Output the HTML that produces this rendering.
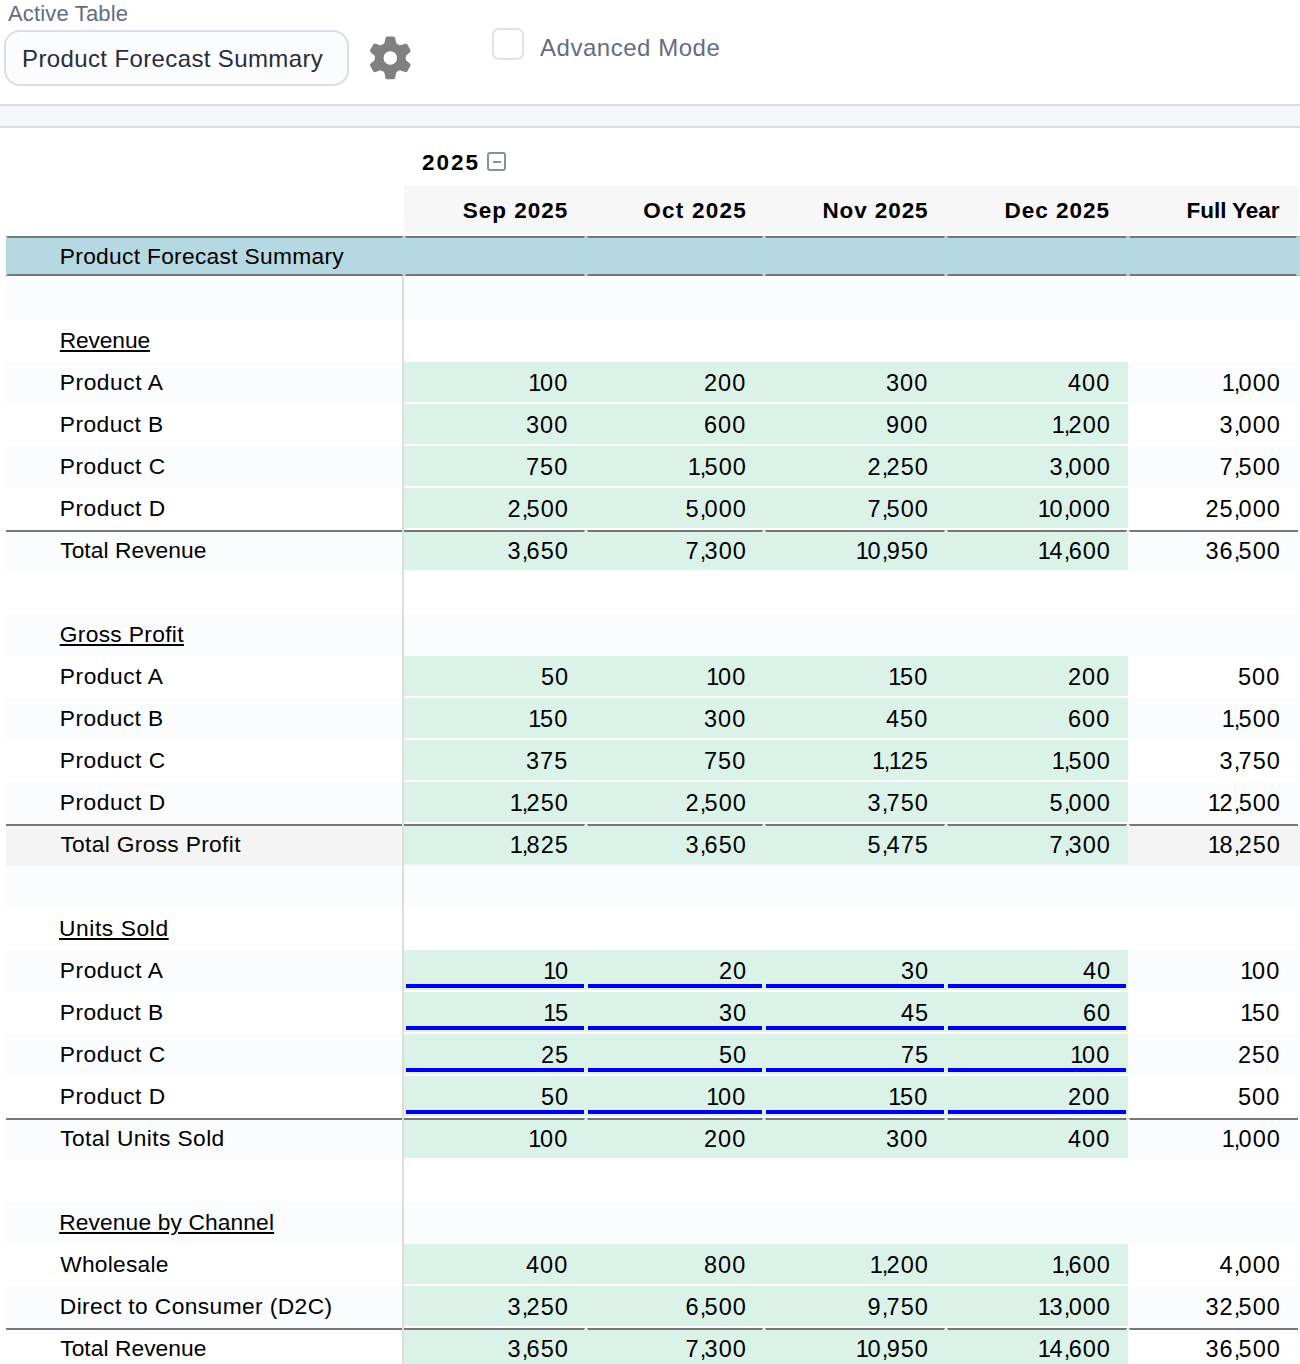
<!DOCTYPE html><html><head><meta charset="utf-8"><title>Product Forecast Summary</title><style>
*{box-sizing:border-box;margin:0;padding:0}
html,body{width:1300px;height:1364px;overflow:hidden;background:#fff}
body{position:relative;font-family:"Liberation Sans",sans-serif;color:#000}
.a{position:absolute}
.t{position:absolute;white-space:nowrap;font-size:22.75px;line-height:40px;height:40px}
.h{position:absolute;white-space:nowrap;font-size:22.5px;font-weight:bold;line-height:32px}
.u{text-decoration:underline;text-decoration-thickness:2px;text-underline-offset:2px}
</style></head><body>
<div class="a" style="left:8px;top:1px;font-size:22px;line-height:26px;color:#646c7f;letter-spacing:0.16px;white-space:nowrap">Active Table</div>
<div class="a" style="left:4px;top:30px;width:345px;height:56px;border:2px solid #dcdce9;border-radius:16px;background:#fbfcfe"></div>
<div class="a" style="left:22px;top:31px;height:56px;line-height:56px;font-size:24px;color:#292c3b;letter-spacing:0.38px;white-space:nowrap">Product Forecast Summary</div>
<svg class="a" style="left:364px;top:30px" width="54" height="56" viewBox="0 0 54 56"><path fill="#808080" fill-rule="evenodd" stroke="#808080" stroke-width="3.8" stroke-linejoin="round" d="M22.20 13.95L23.30 8.40L29.30 8.40L30.40 13.95Q32.65 16.90 36.33 17.37L41.69 15.55L44.69 20.75L40.43 24.48Q39.00 27.90 40.43 31.32L44.69 35.05L41.69 40.25L36.33 38.43Q32.65 38.90 30.40 41.85L29.30 47.40L23.30 47.40L22.20 41.85Q19.95 38.90 16.27 38.43L10.91 40.25L7.91 35.05L12.17 31.32Q13.60 27.90 12.17 24.48L7.91 20.75L10.91 15.55L16.27 17.37Q19.95 16.90 22.20 13.95ZM34.95 27.90A8.65 8.65 0 1 0 17.65 27.90A8.65 8.65 0 1 0 34.95 27.90Z"/></svg>
<div class="a" style="left:492px;top:28px;width:32px;height:32px;border:2px solid #dfe2e7;border-radius:7px;background:#fff"></div>
<div class="a" style="left:540px;top:30px;height:36px;line-height:36px;font-size:24px;color:#646c7f;letter-spacing:0.53px;white-space:nowrap">Advanced Mode</div>
<div class="a" style="left:0;top:104px;width:1300px;height:24px;background:#f6f7fb;border-top:2px solid #dedde9;border-bottom:2px solid #dedde9"></div>
<div class="h" style="left:422.10px;top:147px;letter-spacing:1.967px">2025</div>
<div class="a" style="left:487px;top:152px;width:19px;height:19px;border:2px solid #869394;border-radius:3px"></div>
<div class="a" style="left:493px;top:161px;width:8px;height:2px;background:#869394"></div>
<div class="a" style="left:404px;top:186px;width:894px;height:48px;background:#f7f7f7"></div>
<div class="h" style="left:462.80px;top:195px;letter-spacing:1.000px">Sep 2025</div>
<div class="h" style="left:643.30px;top:195px;letter-spacing:1.243px">Oct 2025</div>
<div class="h" style="left:822.40px;top:195px;letter-spacing:0.914px">Nov 2025</div>
<div class="h" style="left:1004.50px;top:195px;letter-spacing:0.986px">Dec 2025</div>
<div class="h" style="left:1186.60px;top:195px;letter-spacing:-0.062px">Full Year</div>
<div class="a" style="left:6px;top:236px;width:1294px;height:40px;background:#b6d8e3;border-top:2px solid #777777;border-bottom:2px solid #777777"></div>
<div class="t" style="left:59.80px;top:237px;line-height:38px;letter-spacing:0.304px">Product Forecast Summary</div>
<div class="a" style="left:6px;top:276px;width:1294px;height:44px;background:#fbfcfe"></div>
<div class="t u" style="left:59.80px;top:320px;letter-spacing:-0.133px">Revenue</div>
<div class="a" style="left:6px;top:362px;width:1294px;height:42px;background:#fbfcfe"></div>
<div class="a" style="left:404px;top:362px;width:724px;height:40px;background:#daf2e8"></div>
<div class="t" style="left:59.80px;top:362px;letter-spacing:0.550px">Product A</div>
<div class="t" style="left:528.14px;top:363px;font-size:23.5px;letter-spacing:1.029px"><span style="letter-spacing:-1.171px">1</span>00</div>
<div class="t" style="left:703.94px;top:363px;font-size:23.5px;letter-spacing:1.029px">200</div>
<div class="t" style="left:885.94px;top:363px;font-size:23.5px;letter-spacing:1.029px">300</div>
<div class="t" style="left:1067.94px;top:363px;font-size:23.5px;letter-spacing:1.029px">400</div>
<div class="t" style="left:1221.72px;top:363px;font-size:23.5px;letter-spacing:1.029px"><span style="letter-spacing:-1.171px">1</span><span style="letter-spacing:-1.608px">,</span>000</div>
<div class="a" style="left:404px;top:404px;width:724px;height:40px;background:#daf2e8"></div>
<div class="t" style="left:59.80px;top:404px;letter-spacing:0.450px">Product B</div>
<div class="t" style="left:525.94px;top:405px;font-size:23.5px;letter-spacing:1.029px">300</div>
<div class="t" style="left:703.94px;top:405px;font-size:23.5px;letter-spacing:1.029px">600</div>
<div class="t" style="left:885.94px;top:405px;font-size:23.5px;letter-spacing:1.029px">900</div>
<div class="t" style="left:1051.72px;top:405px;font-size:23.5px;letter-spacing:1.029px"><span style="letter-spacing:-1.171px">1</span><span style="letter-spacing:-1.608px">,</span>200</div>
<div class="t" style="left:1219.52px;top:405px;font-size:23.5px;letter-spacing:1.029px">3<span style="letter-spacing:-1.608px">,</span>000</div>
<div class="a" style="left:6px;top:446px;width:1294px;height:42px;background:#fbfcfe"></div>
<div class="a" style="left:404px;top:446px;width:724px;height:40px;background:#daf2e8"></div>
<div class="t" style="left:59.80px;top:446px;letter-spacing:0.525px">Product C</div>
<div class="t" style="left:525.94px;top:447px;font-size:23.5px;letter-spacing:1.029px">750</div>
<div class="t" style="left:687.72px;top:447px;font-size:23.5px;letter-spacing:1.029px"><span style="letter-spacing:-1.171px">1</span><span style="letter-spacing:-1.608px">,</span>500</div>
<div class="t" style="left:867.52px;top:447px;font-size:23.5px;letter-spacing:1.029px">2<span style="letter-spacing:-1.608px">,</span>250</div>
<div class="t" style="left:1049.52px;top:447px;font-size:23.5px;letter-spacing:1.029px">3<span style="letter-spacing:-1.608px">,</span>000</div>
<div class="t" style="left:1219.52px;top:447px;font-size:23.5px;letter-spacing:1.029px">7<span style="letter-spacing:-1.608px">,</span>500</div>
<div class="a" style="left:404px;top:488px;width:724px;height:40px;background:#daf2e8"></div>
<div class="t" style="left:59.80px;top:488px;letter-spacing:0.525px">Product D</div>
<div class="t" style="left:507.52px;top:489px;font-size:23.5px;letter-spacing:1.029px">2<span style="letter-spacing:-1.608px">,</span>500</div>
<div class="t" style="left:685.52px;top:489px;font-size:23.5px;letter-spacing:1.029px">5<span style="letter-spacing:-1.608px">,</span>000</div>
<div class="t" style="left:867.52px;top:489px;font-size:23.5px;letter-spacing:1.029px">7<span style="letter-spacing:-1.608px">,</span>500</div>
<div class="t" style="left:1037.69px;top:489px;font-size:23.5px;letter-spacing:1.029px"><span style="letter-spacing:-1.171px">1</span>0<span style="letter-spacing:-1.608px">,</span>000</div>
<div class="t" style="left:1205.49px;top:489px;font-size:23.5px;letter-spacing:1.029px">25<span style="letter-spacing:-1.608px">,</span>000</div>
<div class="a" style="left:6px;top:530px;width:1294px;height:42px;background:#fbfcfe"></div>
<div class="a" style="left:404px;top:532px;width:724px;height:38px;background:#daf2e8"></div>
<div class="a" style="left:6px;top:530px;width:1292px;height:2px;background:#777777"></div>
<div class="t" style="left:60.20px;top:530px;letter-spacing:0.067px">Total Revenue</div>
<div class="t" style="left:507.52px;top:531px;font-size:23.5px;letter-spacing:1.029px">3<span style="letter-spacing:-1.608px">,</span>650</div>
<div class="t" style="left:685.52px;top:531px;font-size:23.5px;letter-spacing:1.029px">7<span style="letter-spacing:-1.608px">,</span>300</div>
<div class="t" style="left:855.69px;top:531px;font-size:23.5px;letter-spacing:1.029px"><span style="letter-spacing:-1.171px">1</span>0<span style="letter-spacing:-1.608px">,</span>950</div>
<div class="t" style="left:1037.69px;top:531px;font-size:23.5px;letter-spacing:1.029px"><span style="letter-spacing:-1.171px">1</span>4<span style="letter-spacing:-1.608px">,</span>600</div>
<div class="t" style="left:1205.49px;top:531px;font-size:23.5px;letter-spacing:1.029px">36<span style="letter-spacing:-1.608px">,</span>500</div>
<div class="a" style="left:6px;top:614px;width:1294px;height:42px;background:#fbfcfe"></div>
<div class="t u" style="left:59.70px;top:614px;letter-spacing:0.345px">Gross Profit</div>
<div class="a" style="left:404px;top:656px;width:724px;height:40px;background:#daf2e8"></div>
<div class="t" style="left:59.80px;top:656px;letter-spacing:0.550px">Product A</div>
<div class="t" style="left:540.97px;top:657px;font-size:23.5px;letter-spacing:1.029px">50</div>
<div class="t" style="left:706.14px;top:657px;font-size:23.5px;letter-spacing:1.029px"><span style="letter-spacing:-1.171px">1</span>00</div>
<div class="t" style="left:888.14px;top:657px;font-size:23.5px;letter-spacing:1.029px"><span style="letter-spacing:-1.171px">1</span>50</div>
<div class="t" style="left:1067.94px;top:657px;font-size:23.5px;letter-spacing:1.029px">200</div>
<div class="t" style="left:1237.94px;top:657px;font-size:23.5px;letter-spacing:1.029px">500</div>
<div class="a" style="left:6px;top:698px;width:1294px;height:42px;background:#fbfcfe"></div>
<div class="a" style="left:404px;top:698px;width:724px;height:40px;background:#daf2e8"></div>
<div class="t" style="left:59.80px;top:698px;letter-spacing:0.450px">Product B</div>
<div class="t" style="left:528.14px;top:699px;font-size:23.5px;letter-spacing:1.029px"><span style="letter-spacing:-1.171px">1</span>50</div>
<div class="t" style="left:703.94px;top:699px;font-size:23.5px;letter-spacing:1.029px">300</div>
<div class="t" style="left:885.94px;top:699px;font-size:23.5px;letter-spacing:1.029px">450</div>
<div class="t" style="left:1067.94px;top:699px;font-size:23.5px;letter-spacing:1.029px">600</div>
<div class="t" style="left:1221.72px;top:699px;font-size:23.5px;letter-spacing:1.029px"><span style="letter-spacing:-1.171px">1</span><span style="letter-spacing:-1.608px">,</span>500</div>
<div class="a" style="left:404px;top:740px;width:724px;height:40px;background:#daf2e8"></div>
<div class="t" style="left:59.80px;top:740px;letter-spacing:0.525px">Product C</div>
<div class="t" style="left:525.94px;top:741px;font-size:23.5px;letter-spacing:1.029px">375</div>
<div class="t" style="left:703.94px;top:741px;font-size:23.5px;letter-spacing:1.029px">750</div>
<div class="t" style="left:871.92px;top:741px;font-size:23.5px;letter-spacing:1.029px"><span style="letter-spacing:-1.171px">1</span><span style="letter-spacing:-1.608px">,</span><span style="letter-spacing:-1.171px">1</span>25</div>
<div class="t" style="left:1051.72px;top:741px;font-size:23.5px;letter-spacing:1.029px"><span style="letter-spacing:-1.171px">1</span><span style="letter-spacing:-1.608px">,</span>500</div>
<div class="t" style="left:1219.52px;top:741px;font-size:23.5px;letter-spacing:1.029px">3<span style="letter-spacing:-1.608px">,</span>750</div>
<div class="a" style="left:6px;top:782px;width:1294px;height:42px;background:#fbfcfe"></div>
<div class="a" style="left:404px;top:782px;width:724px;height:40px;background:#daf2e8"></div>
<div class="t" style="left:59.80px;top:782px;letter-spacing:0.525px">Product D</div>
<div class="t" style="left:509.72px;top:783px;font-size:23.5px;letter-spacing:1.029px"><span style="letter-spacing:-1.171px">1</span><span style="letter-spacing:-1.608px">,</span>250</div>
<div class="t" style="left:685.52px;top:783px;font-size:23.5px;letter-spacing:1.029px">2<span style="letter-spacing:-1.608px">,</span>500</div>
<div class="t" style="left:867.52px;top:783px;font-size:23.5px;letter-spacing:1.029px">3<span style="letter-spacing:-1.608px">,</span>750</div>
<div class="t" style="left:1049.52px;top:783px;font-size:23.5px;letter-spacing:1.029px">5<span style="letter-spacing:-1.608px">,</span>000</div>
<div class="t" style="left:1207.69px;top:783px;font-size:23.5px;letter-spacing:1.029px"><span style="letter-spacing:-1.171px">1</span>2<span style="letter-spacing:-1.608px">,</span>500</div>
<div class="a" style="left:6px;top:824px;width:1294px;height:42px;background:#f4f4f4"></div>
<div class="a" style="left:404px;top:826px;width:724px;height:38px;background:#daf2e8"></div>
<div class="a" style="left:6px;top:824px;width:1292px;height:2px;background:#777777"></div>
<div class="t" style="left:60.40px;top:824px;letter-spacing:0.329px">Total Gross Profit</div>
<div class="t" style="left:509.72px;top:825px;font-size:23.5px;letter-spacing:1.029px"><span style="letter-spacing:-1.171px">1</span><span style="letter-spacing:-1.608px">,</span>825</div>
<div class="t" style="left:685.52px;top:825px;font-size:23.5px;letter-spacing:1.029px">3<span style="letter-spacing:-1.608px">,</span>650</div>
<div class="t" style="left:867.52px;top:825px;font-size:23.5px;letter-spacing:1.029px">5<span style="letter-spacing:-1.608px">,</span>475</div>
<div class="t" style="left:1049.52px;top:825px;font-size:23.5px;letter-spacing:1.029px">7<span style="letter-spacing:-1.608px">,</span>300</div>
<div class="t" style="left:1207.69px;top:825px;font-size:23.5px;letter-spacing:1.029px"><span style="letter-spacing:-1.171px">1</span>8<span style="letter-spacing:-1.608px">,</span>250</div>
<div class="a" style="left:6px;top:866px;width:1294px;height:42px;background:#fbfcfe"></div>
<div class="t u" style="left:59.00px;top:908px;letter-spacing:0.600px">Units Sold</div>
<div class="a" style="left:6px;top:950px;width:1294px;height:42px;background:#fbfcfe"></div>
<div class="a" style="left:404px;top:950px;width:724px;height:40px;background:#daf2e8"></div>
<div class="t" style="left:59.80px;top:950px;letter-spacing:0.550px">Product A</div>
<div class="t" style="left:543.17px;top:951px;font-size:23.5px;letter-spacing:1.029px"><span style="letter-spacing:-1.171px">1</span>0</div>
<div class="t" style="left:718.97px;top:951px;font-size:23.5px;letter-spacing:1.029px">20</div>
<div class="t" style="left:900.97px;top:951px;font-size:23.5px;letter-spacing:1.029px">30</div>
<div class="t" style="left:1082.97px;top:951px;font-size:23.5px;letter-spacing:1.029px">40</div>
<div class="t" style="left:1240.14px;top:951px;font-size:23.5px;letter-spacing:1.029px"><span style="letter-spacing:-1.171px">1</span>00</div>
<div class="a" style="left:406px;top:984px;width:178px;height:4px;background:#0000ee"></div>
<div class="a" style="left:588px;top:984px;width:174px;height:4px;background:#0000ee"></div>
<div class="a" style="left:766px;top:984px;width:178px;height:4px;background:#0000ee"></div>
<div class="a" style="left:948px;top:984px;width:178px;height:4px;background:#0000ee"></div>
<div class="a" style="left:404px;top:992px;width:724px;height:40px;background:#daf2e8"></div>
<div class="t" style="left:59.80px;top:992px;letter-spacing:0.450px">Product B</div>
<div class="t" style="left:543.17px;top:993px;font-size:23.5px;letter-spacing:1.029px"><span style="letter-spacing:-1.171px">1</span>5</div>
<div class="t" style="left:718.97px;top:993px;font-size:23.5px;letter-spacing:1.029px">30</div>
<div class="t" style="left:900.97px;top:993px;font-size:23.5px;letter-spacing:1.029px">45</div>
<div class="t" style="left:1082.97px;top:993px;font-size:23.5px;letter-spacing:1.029px">60</div>
<div class="t" style="left:1240.14px;top:993px;font-size:23.5px;letter-spacing:1.029px"><span style="letter-spacing:-1.171px">1</span>50</div>
<div class="a" style="left:406px;top:1026px;width:178px;height:4px;background:#0000ee"></div>
<div class="a" style="left:588px;top:1026px;width:174px;height:4px;background:#0000ee"></div>
<div class="a" style="left:766px;top:1026px;width:178px;height:4px;background:#0000ee"></div>
<div class="a" style="left:948px;top:1026px;width:178px;height:4px;background:#0000ee"></div>
<div class="a" style="left:6px;top:1034px;width:1294px;height:42px;background:#fbfcfe"></div>
<div class="a" style="left:404px;top:1034px;width:724px;height:40px;background:#daf2e8"></div>
<div class="t" style="left:59.80px;top:1034px;letter-spacing:0.525px">Product C</div>
<div class="t" style="left:540.97px;top:1035px;font-size:23.5px;letter-spacing:1.029px">25</div>
<div class="t" style="left:718.97px;top:1035px;font-size:23.5px;letter-spacing:1.029px">50</div>
<div class="t" style="left:900.97px;top:1035px;font-size:23.5px;letter-spacing:1.029px">75</div>
<div class="t" style="left:1070.14px;top:1035px;font-size:23.5px;letter-spacing:1.029px"><span style="letter-spacing:-1.171px">1</span>00</div>
<div class="t" style="left:1237.94px;top:1035px;font-size:23.5px;letter-spacing:1.029px">250</div>
<div class="a" style="left:406px;top:1068px;width:178px;height:4px;background:#0000ee"></div>
<div class="a" style="left:588px;top:1068px;width:174px;height:4px;background:#0000ee"></div>
<div class="a" style="left:766px;top:1068px;width:178px;height:4px;background:#0000ee"></div>
<div class="a" style="left:948px;top:1068px;width:178px;height:4px;background:#0000ee"></div>
<div class="a" style="left:404px;top:1076px;width:724px;height:40px;background:#daf2e8"></div>
<div class="t" style="left:59.80px;top:1076px;letter-spacing:0.525px">Product D</div>
<div class="t" style="left:540.97px;top:1077px;font-size:23.5px;letter-spacing:1.029px">50</div>
<div class="t" style="left:706.14px;top:1077px;font-size:23.5px;letter-spacing:1.029px"><span style="letter-spacing:-1.171px">1</span>00</div>
<div class="t" style="left:888.14px;top:1077px;font-size:23.5px;letter-spacing:1.029px"><span style="letter-spacing:-1.171px">1</span>50</div>
<div class="t" style="left:1067.94px;top:1077px;font-size:23.5px;letter-spacing:1.029px">200</div>
<div class="t" style="left:1237.94px;top:1077px;font-size:23.5px;letter-spacing:1.029px">500</div>
<div class="a" style="left:406px;top:1110px;width:178px;height:4px;background:#0000ee"></div>
<div class="a" style="left:588px;top:1110px;width:174px;height:4px;background:#0000ee"></div>
<div class="a" style="left:766px;top:1110px;width:178px;height:4px;background:#0000ee"></div>
<div class="a" style="left:948px;top:1110px;width:178px;height:4px;background:#0000ee"></div>
<div class="a" style="left:6px;top:1118px;width:1294px;height:42px;background:#fbfcfe"></div>
<div class="a" style="left:404px;top:1120px;width:724px;height:38px;background:#daf2e8"></div>
<div class="a" style="left:6px;top:1118px;width:1292px;height:2px;background:#777777"></div>
<div class="t" style="left:60.20px;top:1118px;letter-spacing:0.400px">Total Units Sold</div>
<div class="t" style="left:528.14px;top:1119px;font-size:23.5px;letter-spacing:1.029px"><span style="letter-spacing:-1.171px">1</span>00</div>
<div class="t" style="left:703.94px;top:1119px;font-size:23.5px;letter-spacing:1.029px">200</div>
<div class="t" style="left:885.94px;top:1119px;font-size:23.5px;letter-spacing:1.029px">300</div>
<div class="t" style="left:1067.94px;top:1119px;font-size:23.5px;letter-spacing:1.029px">400</div>
<div class="t" style="left:1221.72px;top:1119px;font-size:23.5px;letter-spacing:1.029px"><span style="letter-spacing:-1.171px">1</span><span style="letter-spacing:-1.608px">,</span>000</div>
<div class="a" style="left:6px;top:1202px;width:1294px;height:42px;background:#fbfcfe"></div>
<div class="t u" style="left:59.20px;top:1202px;letter-spacing:0.135px">Revenue by Channel</div>
<div class="a" style="left:404px;top:1244px;width:724px;height:40px;background:#daf2e8"></div>
<div class="t" style="left:60.20px;top:1244px;letter-spacing:0.263px">Wholesale</div>
<div class="t" style="left:525.94px;top:1245px;font-size:23.5px;letter-spacing:1.029px">400</div>
<div class="t" style="left:703.94px;top:1245px;font-size:23.5px;letter-spacing:1.029px">800</div>
<div class="t" style="left:869.72px;top:1245px;font-size:23.5px;letter-spacing:1.029px"><span style="letter-spacing:-1.171px">1</span><span style="letter-spacing:-1.608px">,</span>200</div>
<div class="t" style="left:1051.72px;top:1245px;font-size:23.5px;letter-spacing:1.029px"><span style="letter-spacing:-1.171px">1</span><span style="letter-spacing:-1.608px">,</span>600</div>
<div class="t" style="left:1219.52px;top:1245px;font-size:23.5px;letter-spacing:1.029px">4<span style="letter-spacing:-1.608px">,</span>000</div>
<div class="a" style="left:6px;top:1286px;width:1294px;height:42px;background:#fbfcfe"></div>
<div class="a" style="left:404px;top:1286px;width:724px;height:40px;background:#daf2e8"></div>
<div class="t" style="left:59.80px;top:1286px;letter-spacing:0.404px">Direct to Consumer (D2C)</div>
<div class="t" style="left:507.52px;top:1287px;font-size:23.5px;letter-spacing:1.029px">3<span style="letter-spacing:-1.608px">,</span>250</div>
<div class="t" style="left:685.52px;top:1287px;font-size:23.5px;letter-spacing:1.029px">6<span style="letter-spacing:-1.608px">,</span>500</div>
<div class="t" style="left:867.52px;top:1287px;font-size:23.5px;letter-spacing:1.029px">9<span style="letter-spacing:-1.608px">,</span>750</div>
<div class="t" style="left:1037.69px;top:1287px;font-size:23.5px;letter-spacing:1.029px"><span style="letter-spacing:-1.171px">1</span>3<span style="letter-spacing:-1.608px">,</span>000</div>
<div class="t" style="left:1205.49px;top:1287px;font-size:23.5px;letter-spacing:1.029px">32<span style="letter-spacing:-1.608px">,</span>500</div>
<div class="a" style="left:404px;top:1330px;width:724px;height:38px;background:#daf2e8"></div>
<div class="a" style="left:6px;top:1328px;width:1292px;height:2px;background:#777777"></div>
<div class="t" style="left:60.20px;top:1328px;letter-spacing:0.067px">Total Revenue</div>
<div class="t" style="left:507.52px;top:1329px;font-size:23.5px;letter-spacing:1.029px">3<span style="letter-spacing:-1.608px">,</span>650</div>
<div class="t" style="left:685.52px;top:1329px;font-size:23.5px;letter-spacing:1.029px">7<span style="letter-spacing:-1.608px">,</span>300</div>
<div class="t" style="left:855.69px;top:1329px;font-size:23.5px;letter-spacing:1.029px"><span style="letter-spacing:-1.171px">1</span>0<span style="letter-spacing:-1.608px">,</span>950</div>
<div class="t" style="left:1037.69px;top:1329px;font-size:23.5px;letter-spacing:1.029px"><span style="letter-spacing:-1.171px">1</span>4<span style="letter-spacing:-1.608px">,</span>600</div>
<div class="t" style="left:1205.49px;top:1329px;font-size:23.5px;letter-spacing:1.029px">36<span style="letter-spacing:-1.608px">,</span>500</div>
<div class="a" style="left:402px;top:236px;width:4px;height:2px;background:#b6d8e3;clip-path:polygon(25% 0,75% 0,100% 100%,0 100%)"></div>
<div class="a" style="left:402px;top:274px;width:4px;height:2px;background:#b6d8e3;clip-path:polygon(0 0,100% 0,75% 100%,25% 100%)"></div>
<div class="a" style="left:584px;top:236px;width:4px;height:2px;background:#b6d8e3;clip-path:polygon(25% 0,75% 0,100% 100%,0 100%)"></div>
<div class="a" style="left:584px;top:274px;width:4px;height:2px;background:#b6d8e3;clip-path:polygon(0 0,100% 0,75% 100%,25% 100%)"></div>
<div class="a" style="left:762px;top:236px;width:4px;height:2px;background:#b6d8e3;clip-path:polygon(25% 0,75% 0,100% 100%,0 100%)"></div>
<div class="a" style="left:762px;top:274px;width:4px;height:2px;background:#b6d8e3;clip-path:polygon(0 0,100% 0,75% 100%,25% 100%)"></div>
<div class="a" style="left:944px;top:236px;width:4px;height:2px;background:#b6d8e3;clip-path:polygon(25% 0,75% 0,100% 100%,0 100%)"></div>
<div class="a" style="left:944px;top:274px;width:4px;height:2px;background:#b6d8e3;clip-path:polygon(0 0,100% 0,75% 100%,25% 100%)"></div>
<div class="a" style="left:1126px;top:236px;width:4px;height:2px;background:#b6d8e3;clip-path:polygon(25% 0,75% 0,100% 100%,0 100%)"></div>
<div class="a" style="left:1126px;top:274px;width:4px;height:2px;background:#b6d8e3;clip-path:polygon(0 0,100% 0,75% 100%,25% 100%)"></div>
<div class="a" style="left:1296px;top:236px;width:4px;height:2px;background:#b6d8e3;clip-path:polygon(25% 0,75% 0,100% 100%,0 100%)"></div>
<div class="a" style="left:1296px;top:274px;width:4px;height:2px;background:#b6d8e3;clip-path:polygon(0 0,100% 0,75% 100%,25% 100%)"></div>
<div class="a" style="left:6px;top:236px;width:2px;height:2px;background:#b6d8e3;clip-path:polygon(0 0,100% 100%,0 100%)"></div>
<div class="a" style="left:6px;top:274px;width:2px;height:2px;background:#b6d8e3;clip-path:polygon(0 0,100% 0,0 100%)"></div>
<div class="a" style="left:584px;top:530px;width:4px;height:2px;background:#daf2e8;clip-path:polygon(25% 0,75% 0,100% 100%,0 100%)"></div>
<div class="a" style="left:762px;top:530px;width:4px;height:2px;background:#daf2e8;clip-path:polygon(25% 0,75% 0,100% 100%,0 100%)"></div>
<div class="a" style="left:944px;top:530px;width:4px;height:2px;background:#daf2e8;clip-path:polygon(25% 0,75% 0,100% 100%,0 100%)"></div>
<div class="a" style="left:1126px;top:530px;width:4px;height:2px;background:#daf2e8;clip-path:polygon(25% 0,75% 0,100% 100%,0 100%)"></div>
<div class="a" style="left:584px;top:824px;width:4px;height:2px;background:#daf2e8;clip-path:polygon(25% 0,75% 0,100% 100%,0 100%)"></div>
<div class="a" style="left:762px;top:824px;width:4px;height:2px;background:#daf2e8;clip-path:polygon(25% 0,75% 0,100% 100%,0 100%)"></div>
<div class="a" style="left:944px;top:824px;width:4px;height:2px;background:#daf2e8;clip-path:polygon(25% 0,75% 0,100% 100%,0 100%)"></div>
<div class="a" style="left:1126px;top:824px;width:4px;height:2px;background:#daf2e8;clip-path:polygon(25% 0,75% 0,100% 100%,0 100%)"></div>
<div class="a" style="left:584px;top:1118px;width:4px;height:2px;background:#daf2e8;clip-path:polygon(25% 0,75% 0,100% 100%,0 100%)"></div>
<div class="a" style="left:762px;top:1118px;width:4px;height:2px;background:#daf2e8;clip-path:polygon(25% 0,75% 0,100% 100%,0 100%)"></div>
<div class="a" style="left:944px;top:1118px;width:4px;height:2px;background:#daf2e8;clip-path:polygon(25% 0,75% 0,100% 100%,0 100%)"></div>
<div class="a" style="left:1126px;top:1118px;width:4px;height:2px;background:#daf2e8;clip-path:polygon(25% 0,75% 0,100% 100%,0 100%)"></div>
<div class="a" style="left:584px;top:1328px;width:4px;height:2px;background:#daf2e8;clip-path:polygon(25% 0,75% 0,100% 100%,0 100%)"></div>
<div class="a" style="left:762px;top:1328px;width:4px;height:2px;background:#daf2e8;clip-path:polygon(25% 0,75% 0,100% 100%,0 100%)"></div>
<div class="a" style="left:944px;top:1328px;width:4px;height:2px;background:#daf2e8;clip-path:polygon(25% 0,75% 0,100% 100%,0 100%)"></div>
<div class="a" style="left:1126px;top:1328px;width:4px;height:2px;background:#daf2e8;clip-path:polygon(25% 0,75% 0,100% 100%,0 100%)"></div>
<div class="a" style="left:402px;top:276px;width:2px;height:1100px;background:#dddddd"></div>
</body></html>
